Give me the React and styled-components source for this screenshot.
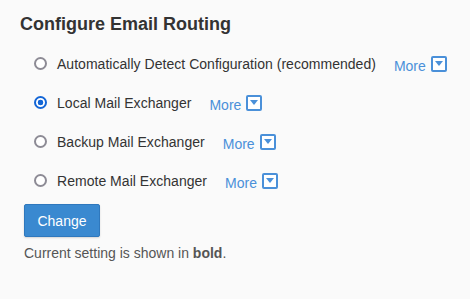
import React, { useState } from "react";
import styled, { createGlobalStyle } from "styled-components";

const Global = createGlobalStyle`
  html, body { margin: 0; padding: 0; background: #fafafa; }
  body { font-family: "Liberation Sans", Arial, sans-serif; color: #333; }
`;

const Page = styled.div`
  padding: 14px 0 0 20px;
`;

const Title = styled.h2`
  margin: 0;
  font-size: 18px;
  line-height: 21px;
  font-weight: bold;
  color: #333;
`;

const List = styled.div`
  margin-top: 9px;
  padding-left: 14px;
  display: flex;
  flex-direction: column;
`;

const Row = styled.label`
  display: flex;
  align-items: center;
  height: 39px;
`;

const Radio = styled.input`
  appearance: none;
  box-sizing: border-box;
  width: 13px;
  height: 13px;
  margin: 0 10px 0 0;
  border: 2px solid #8d8b95;
  border-radius: 50%;
  background: #fff;
  &:checked {
    border-color: #1466d6;
    background: radial-gradient(circle, #1466d6 0 2.6px, #fff 3.1px);
  }
`;

const Label = styled.span`
  font-size: 14px;
  line-height: 16px;
  color: #333;
  letter-spacing: 0.03px;
`;

const More = styled.span`
  display: flex;
  align-items: center;
  margin-left: 18px;
  color: #4a90d9;
  font-size: 14px;
`;

const MoreText = styled.span`
  padding-top: 5px;
  line-height: 16px;
`;

const DropBox = styled.span`
  margin-left: 5px;
  width: 12px;
  height: 12px;
  border: 2px solid #4a90d9;
  border-radius: 2px;
  display: flex;
  align-items: center;
  justify-content: center;
  background: #fff;
`;

const Button = styled.button`
  margin: 4px 0 0 4px;
  width: 76px;
  height: 33px;
  background: #3a89d0;
  border: 1px solid #2f78bd;
  border-radius: 2px;
  color: #fff;
  font-family: "Liberation Sans", Arial, sans-serif;
  font-size: 14px;
  padding: 0;
  box-shadow: 0 1px 2px rgba(0, 0, 0, 0.15);
`;

const Note = styled.p`
  margin: 8px 0 0 4px;
  font-size: 14px;
  line-height: 16px;
  color: #555;
`;

const options = [
  "Automatically Detect Configuration (recommended)",
  "Local Mail Exchanger",
  "Backup Mail Exchanger",
  "Remote Mail Exchanger",
];

export default function App() {
  const [sel, setSel] = useState(1);
  return (
    <Page>
      <Global />
      <Title>Configure Email Routing</Title>
      <List>
        {options.map((o, i) => (
          <Row key={o}>
            <Radio
              type="radio"
              name="routing"
              checked={sel === i}
              onChange={() => setSel(i)}
            />
            <Label>{o}</Label>
            <More>
              <MoreText>More</MoreText>
              <DropBox>
                <svg width="8" height="5" viewBox="0 0 8 5">
                  <path d="M0 0 L8 0 L4 5 Z" fill="#4a90d9" />
                </svg>
              </DropBox>
            </More>
          </Row>
        ))}
      </List>
      <Button>Change</Button>
      <Note>
        Current setting is shown in <b>bold</b>.
      </Note>
    </Page>
  );
}
